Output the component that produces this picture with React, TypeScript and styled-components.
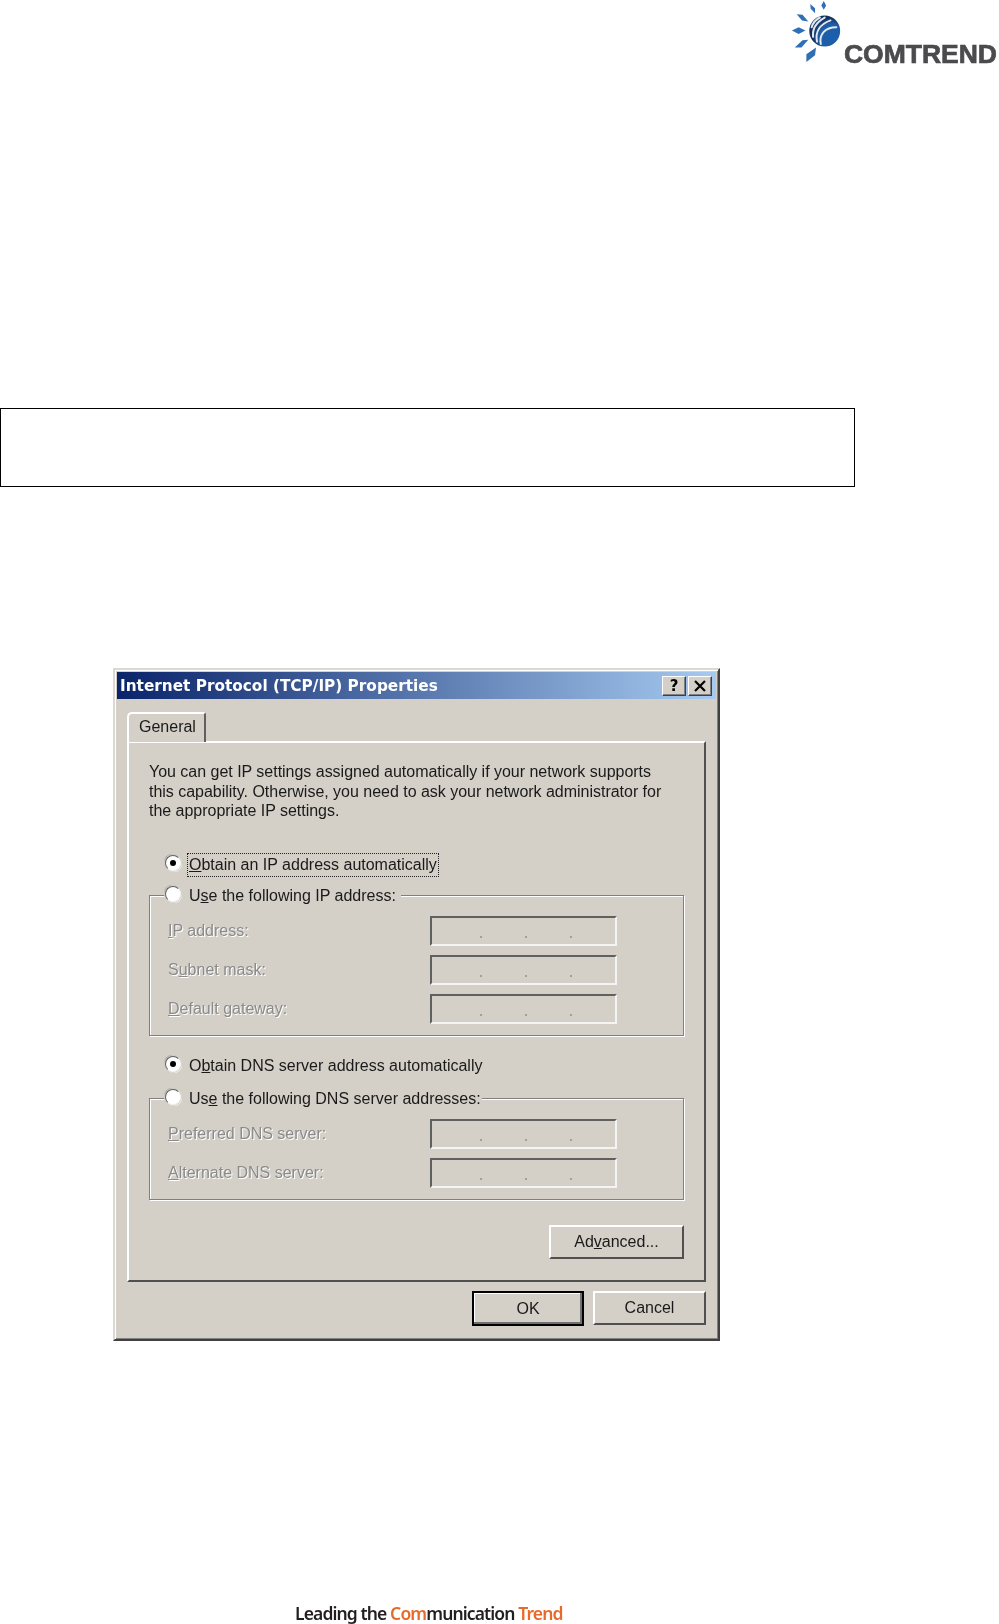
import React from "react";
import styled, { createGlobalStyle } from "styled-components";

const GlobalStyle = createGlobalStyle`
  html, body {
    margin: 0;
    padding: 0;
    background: #fff;
  }
`;

const Page = styled.div`
  width: 999px;
  height: 1624px;
  display: flex;
  flex-direction: column;
  overflow: hidden;
  background: #fff;
`;

const LogoRow = styled.header`
  height: 64px;
  display: flex;
  justify-content: flex-end;
  align-items: flex-end;
  padding-right: 2px;
  filter: blur(0.4px);
`;

const LogoText = styled.span`
  font-family: "Liberation Sans", Arial, sans-serif;
  font-weight: 700;
  font-size: 26.5px;
  line-height: 20px;
  height: 20px;
  letter-spacing: 0;
  color: #4b4b4d;
  -webkit-text-stroke: 0.7px #4b4b4d;
`;

const NoteBox = styled.div`
  box-sizing: border-box;
  width: 855px;
  height: 79px;
  margin-top: 344px;
  border: 1px solid #000;
`;

const Dialog = styled.section`
  box-sizing: border-box;
  width: 607px;
  height: 673px;
  margin: 181px 0 0 113px;
  padding: 2px;
  display: flex;
  flex-direction: column;
  background: #d4d0c8;
  border: 2px solid;
  border-color: #dcd9d2 #404040 #404040 #dcd9d2;
  box-shadow: inset 1px 1px 0 #fff, inset -1px -1px 0 #808080;
  font-family: "Liberation Sans", Arial, sans-serif;
  font-size: 16px;
  color: #1a1a1a;
  filter: blur(0.35px);
`;

const TitleBar = styled.div`
  height: 27px;
  flex: none;
  display: flex;
  align-items: center;
  justify-content: space-between;
  padding: 0 4px 0 3px;
  background: linear-gradient(to right, #0a246a, #a6caf0);
`;

const TitleText = styled.span`
  font-family: "DejaVu Sans", Verdana, sans-serif;
  font-weight: 700;
  font-size: 15.3px;
  color: #fff;
`;

const TitleButtons = styled.div`
  display: flex;
  gap: 2px;
`;

const TitleButton = styled.span`
  box-sizing: border-box;
  width: 24px;
  height: 20px;
  display: flex;
  align-items: center;
  justify-content: center;
  background: #d4d0c8;
  border: 1px solid;
  border-color: #fff #404040 #404040 #fff;
  box-shadow: inset -1px -1px 0 #808080;
  font-family: "DejaVu Sans", sans-serif;
  font-weight: 700;
  font-size: 15px;
  color: #000;
`;

const DialogBody = styled.div`
  flex: 1;
  display: flex;
  flex-direction: column;
  padding: 13px 10px 0 10px;
`;

const Tab = styled.div`
  box-sizing: border-box;
  width: 79px;
  height: 30px;
  margin-bottom: -1px;
  padding: 0 0 2px 10px;
  display: flex;
  align-items: center;
  position: relative;
  z-index: 1;
  background: #d4d0c8;
  border-top: 2px solid #fff;
  border-left: 2px solid #fff;
  border-right: 2px solid #606060;
  border-top-left-radius: 5px;
  border-top-right-radius: 3px;
`;

const Panel = styled.div`
  box-sizing: border-box;
  height: 541px;
  padding: 19px 20px 0 20px;
  border: 2px solid;
  border-color: #fff #505050 #505050 #fff;
`;

const Intro = styled.p`
  margin: 0 0 32px 0;
  line-height: 19.5px;
  letter-spacing: -0.02px;
`;

const RadioRow = styled.div<{ $top?: number }>`
  height: 24px;
  display: flex;
  align-items: center;
  gap: 7px;
  padding-left: 16px;
  margin-top: ${(p) => p.$top ?? 0}px;
`;

const RadioMark = styled.span<{ $checked?: boolean }>`
  box-sizing: border-box;
  width: 16px;
  height: 16px;
  flex: none;
  margin-bottom: 3px;
  display: flex;
  align-items: center;
  justify-content: center;
  border-radius: 50%;
  background: #fff;
  border: 1px solid;
  border-color: #606060 #f4f4f4 #f4f4f4 #606060;
  box-shadow: 0 0 0 1px #d4d0c8, -1px -1px 0 0 #a0a0a0, 1px 1px 0 0 #fff;

  &::after {
    content: "";
    width: 6px;
    height: 6px;
    border-radius: 50%;
    background: ${(p) => (p.$checked ? "#000" : "transparent")};
  }
`;

const RadioLabel = styled.span<{ $focused?: boolean }>`
  padding: 2px 1px;
  outline: ${(p) => (p.$focused ? "1px dotted #222" : "none")};
  white-space: nowrap;
`;

const Group = styled.fieldset<{ $rowsTop: number; $top: number }>`
  box-sizing: border-box;
  margin: ${(p) => p.$top}px 0 0 0;
  padding: ${(p) => p.$rowsTop}px 18px 12px 18px;
  min-width: 0;
  border: 1px solid #808080;
  box-shadow: 1px 1px 0 #fff, inset 1px 1px 0 #fff;
`;

const GroupLegend = styled.legend<{ $tail: number }>`
  box-sizing: border-box;
  height: 22px;
  margin-left: -3px;
  padding: 0 ${(p) => p.$tail}px 0 0;
  display: flex;
  align-items: center;
  gap: 7px;
  background: #d4d0c8;
`;

const FieldRows = styled.div`
  display: flex;
  flex-direction: column;
  gap: 10px;
`;

const FieldRow = styled.div`
  display: grid;
  grid-template-columns: 262px 187px;
  align-items: center;
  height: 29px;
`;

const FieldLabel = styled.span`
  color: #8a8a8a;
  text-shadow: 1px 1px 0 #fff;
`;

const IpField = styled.div`
  box-sizing: border-box;
  height: 30px;
  display: grid;
  grid-template-columns: repeat(3, 45px);
  justify-content: center;
  justify-items: center;
  align-items: end;
  padding: 0 0 6px 4px;
  border: 2px solid;
  border-color: #606060 #f4f4f4 #f4f4f4 #606060;
`;

const IpDot = styled.i`
  width: 2px;
  height: 2px;
  background: #a0a0a0;
`;

const ButtonRow = styled.div<{ $top: number }>`
  display: flex;
  justify-content: flex-end;
  gap: 9px;
  margin-top: ${(p) => p.$top}px;
`;

const WinButton = styled.button<{ $width: number; $default?: boolean }>`
  box-sizing: border-box;
  width: ${(p) => p.$width}px;
  height: ${(p) => (p.$default ? 35 : 34)}px;
  padding: 0;
  background: #d4d0c8;
  font: inherit;
  color: inherit;
  border: 2px solid;
  border-color: ${(p) => (p.$default ? "#000" : "#fff #505050 #505050 #fff")};
  box-shadow: ${(p) => (p.$default ? "inset -2px -2px 0 #707070, inset 1px 1px 0 #fff" : "none")};
`;

const Tagline = styled.footer`
  margin-top: auto;
  height: 21px;
  padding-left: 295px;
  font-family: "Noto Sans", "Open Sans", sans-serif;
  font-weight: 600;
  font-size: 17.5px;
  line-height: 21px;
  letter-spacing: -0.88px;
  color: #231f20;
  filter: blur(0.3px);
`;

const Accent = styled.span`
  color: #e8692a;
`;

function LogoMark(): JSX.Element {
  return (
    <svg width="55" height="64" viewBox="0 0 57 64">
      <defs>
        <radialGradient id="globe" cx="72%" cy="68%" r="62%">
          <stop offset="0%" stopColor="#1a5fae" />
          <stop offset="65%" stopColor="#1f5da6" />
          <stop offset="100%" stopColor="#14305a" />
        </radialGradient>
      </defs>
      <g fill="#2f6fb6">
        <polygon points="36,0 38.5,4.5 36,9 33.5,4.5" />
        <polygon points="22,3 27,7.5 27,12.5 22.5,8" />
        <polygon points="8,13.5 14,14 20,21 13.5,20" />
        <polygon points="3,30.5 10,27 17,30.5 10,34" />
        <polygon points="6,48 14,40.5 20,40 13,48" />
        <polygon points="18,63 18,55 28,48 27,56" />
      </g>
      <circle cx="37" cy="31" r="16" fill="url(#globe)" />
      <g fill="none" stroke="#dfe8f2" strokeWidth="2.1" strokeLinecap="round">
        <path d="M23.5 27 C25 22 28 19 32 17" />
        <path d="M25 37 C24 29 28 22 37 17" />
        <path d="M29 42 C27 32 32 24 43 20" />
        <path d="M33 44.5 C31 35 37 27 49 27" />
      </g>
    </svg>
  );
}

function CloseGlyph(): JSX.Element {
  return (
    <svg width="14" height="12" viewBox="0 0 14 12">
      <path d="M2 1 L12 11 M12 1 L2 11" stroke="#000" strokeWidth="2.2" fill="none" />
    </svg>
  );
}

type IpRowProps = { label: React.ReactNode };

function IpRow({ label }: IpRowProps): JSX.Element {
  return (
    <FieldRow>
      <FieldLabel>{label}</FieldLabel>
      <IpField>
        <IpDot />
        <IpDot />
        <IpDot />
      </IpField>
    </FieldRow>
  );
}

export default function App(): JSX.Element {
  return (
    <Page>
      <GlobalStyle />
      <LogoRow>
        <LogoMark />
        <LogoText>COMTREND</LogoText>
      </LogoRow>
      <NoteBox />
      <Dialog>
        <TitleBar>
          <TitleText>Internet Protocol (TCP/IP) Properties</TitleText>
          <TitleButtons>
            <TitleButton>?</TitleButton>
            <TitleButton>
              <CloseGlyph />
            </TitleButton>
          </TitleButtons>
        </TitleBar>
        <DialogBody>
          <Tab>General</Tab>
          <Panel>
            <Intro>
              You can get IP settings assigned automatically if your network supports
              <br />
              this capability. Otherwise, you need to ask your network administrator for
              <br />
              the appropriate IP settings.
            </Intro>
            <RadioRow>
              <RadioMark $checked />
              <RadioLabel $focused>
                <u>O</u>btain an IP address automatically
              </RadioLabel>
            </RadioRow>
            <Group $top={8} $rowsTop={9}>
              <GroupLegend $tail={4}>
                <RadioMark />
                <RadioLabel>
                  U<u>s</u>e the following IP address:
                </RadioLabel>
              </GroupLegend>
              <FieldRows>
                <IpRow label={<><u>I</u>P address:</>} />
                <IpRow label={<>S<u>u</u>bnet mask:</>} />
                <IpRow label={<><u>D</u>efault gateway:</>} />
              </FieldRows>
            </Group>
            <RadioRow $top={18}>
              <RadioMark $checked />
              <RadioLabel>
                O<u>b</u>tain DNS server address automatically
              </RadioLabel>
            </RadioRow>
            <Group $top={10} $rowsTop={9}>
              <GroupLegend $tail={0}>
                <RadioMark />
                <RadioLabel>
                  Us<u>e</u> the following DNS server addresses:
                </RadioLabel>
              </GroupLegend>
              <FieldRows>
                <IpRow label={<><u>P</u>referred DNS server:</>} />
                <IpRow label={<><u>A</u>lternate DNS server:</>} />
              </FieldRows>
            </Group>
            <ButtonRow $top={25}>
              <WinButton $width={135}>
                Ad<u>v</u>anced...
              </WinButton>
            </ButtonRow>
          </Panel>
          <ButtonRow $top={9}>
            <WinButton $width={112} $default>
              OK
            </WinButton>
            <WinButton $width={113}>Cancel</WinButton>
          </ButtonRow>
        </DialogBody>
      </Dialog>
      <Tagline>
        Leading the <Accent>Com</Accent>munication <Accent>Trend</Accent>
      </Tagline>
    </Page>
  );
}
